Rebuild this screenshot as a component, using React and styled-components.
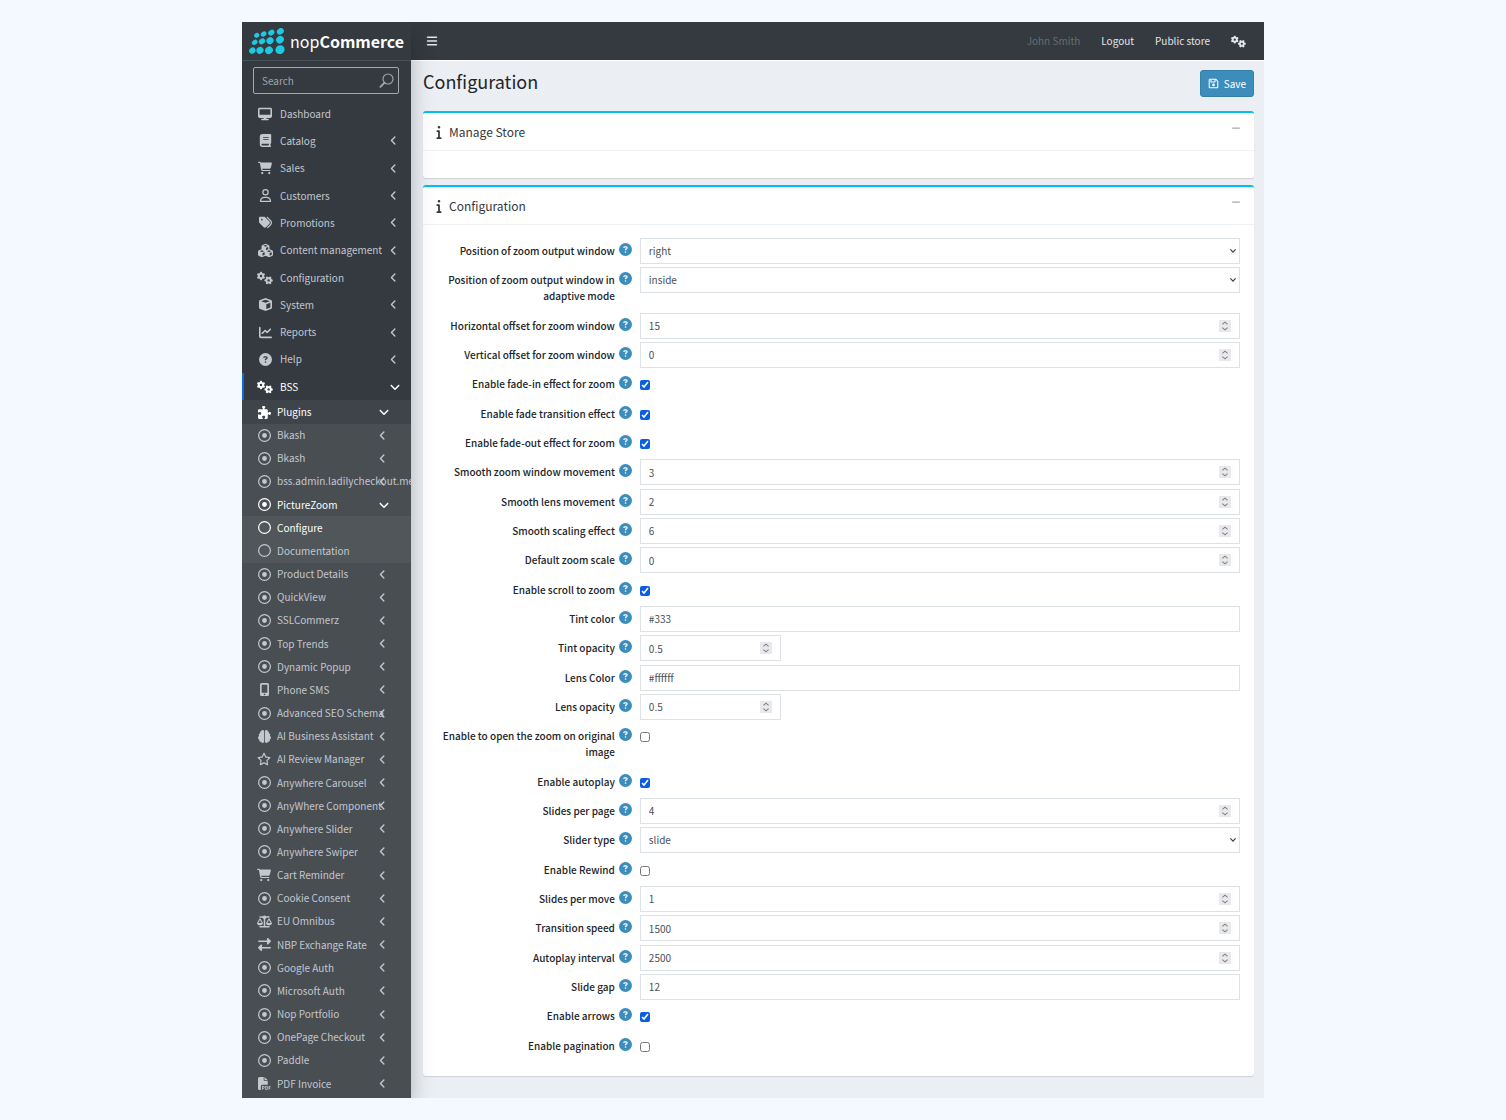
import React from "react";
import styled, { createGlobalStyle, css } from "styled-components";
import {
  FaAngleDown,
  FaAngleLeft,
  FaBars,
  FaBook,
  FaBrain,
  FaCartShopping,
  FaChartLine,
  FaCircleQuestion,
  FaCube,
  FaCubes,
  FaDesktop,
  FaFilePdf,
  FaGears,
  FaInfo,
  FaMinus,
  FaMobileScreenButton,
  FaPuzzlePiece,
  FaRegCircle,
  FaRegCircleDot,
  FaRegFloppyDisk,
  FaRegStar,
  FaRegUser,
  FaRightLeft,
  FaScaleBalanced,
  FaTags,
} from "react-icons/fa6";

const menu = [
  { text: "Dashboard", icon: FaDesktop, size: 14 },
  { text: "Catalog", icon: FaBook, arrow: "left" },
  { text: "Sales", icon: FaCartShopping, size: 14, arrow: "left" },
  { text: "Customers", icon: FaRegUser, arrow: "left" },
  { text: "Promotions", icon: FaTags, arrow: "left" },
  { text: "Content management", icon: FaCubes, size: 15, arrow: "left" },
  { text: "Configuration", icon: FaGears, size: 16, arrow: "left" },
  { text: "System", icon: FaCube, arrow: "left" },
  { text: "Reports", icon: FaChartLine, arrow: "left" },
  { text: "Help", icon: FaCircleQuestion, arrow: "left" },
  { text: "BSS", icon: FaGears, size: 16, arrow: "down", active: true },
  { text: "Plugins", level: 1, icon: FaPuzzlePiece, arrow: "down", active: true },
  { text: "Bkash", level: 2, arrow: "left" },
  { text: "Bkash", level: 2, arrow: "left" },
  { text: "bss.admin.ladilycheckout.menu", level: 2, arrow: "left" },
  { text: "PictureZoom", level: 2, arrow: "down", active: true },
  { text: "Configure", level: 3, icon: FaRegCircle, active: true },
  { text: "Documentation", level: 3, icon: FaRegCircle },
  { text: "Product Details", level: 2, arrow: "left" },
  { text: "QuickView", level: 2, arrow: "left" },
  { text: "SSLCommerz", level: 2, arrow: "left" },
  { text: "Top Trends", level: 2, arrow: "left" },
  { text: "Dynamic Popup", level: 2, arrow: "left" },
  { text: "Phone SMS", level: 2, icon: FaMobileScreenButton, arrow: "left" },
  { text: "Advanced SEO Schema", level: 2, arrow: "left" },
  { text: "AI Business Assistant", level: 2, icon: FaBrain, arrow: "left" },
  { text: "AI Review Manager", level: 2, icon: FaRegStar, size: 14, arrow: "left" },
  { text: "Anywhere Carousel", level: 2, arrow: "left" },
  { text: "AnyWhere Component", level: 2, arrow: "left" },
  { text: "Anywhere Slider", level: 2, arrow: "left" },
  { text: "Anywhere Swiper", level: 2, arrow: "left" },
  { text: "Cart Reminder", level: 2, icon: FaCartShopping, size: 14, arrow: "left" },
  { text: "Cookie Consent", level: 2, arrow: "left" },
  { text: "EU Omnibus", level: 2, icon: FaScaleBalanced, size: 15, arrow: "left" },
  { text: "NBP Exchange Rate", level: 2, icon: FaRightLeft, arrow: "left" },
  { text: "Google Auth", level: 2, arrow: "left" },
  { text: "Microsoft Auth", level: 2, arrow: "left" },
  { text: "Nop Portfolio", level: 2, arrow: "left" },
  { text: "OnePage Checkout", level: 2, arrow: "left" },
  { text: "Paddle", level: 2, arrow: "left" },
  { text: "PDF Invoice", level: 2, icon: FaFilePdf, arrow: "left" },
];

const fields = [
  { label: "Position of zoom output window", type: "select", value: "right" },
  { label: "Position of zoom output window in adaptive mode", type: "select", value: "inside" },
  { label: "Horizontal offset for zoom window", type: "number", value: 15 },
  { label: "Vertical offset for zoom window", type: "number", value: 0 },
  { label: "Enable fade-in effect for zoom", type: "checkbox", value: true },
  { label: "Enable fade transition effect", type: "checkbox", value: true },
  { label: "Enable fade-out effect for zoom", type: "checkbox", value: true },
  { label: "Smooth zoom window movement", type: "number", value: 3 },
  { label: "Smooth lens movement", type: "number", value: 2 },
  { label: "Smooth scaling effect", type: "number", value: 6 },
  { label: "Default zoom scale", type: "number", value: 0 },
  { label: "Enable scroll to zoom", type: "checkbox", value: true },
  { label: "Tint color", type: "text", value: "#333" },
  { label: "Tint opacity", type: "number", value: 0.5, short: true },
  { label: "Lens Color", type: "text", value: "#ffffff" },
  { label: "Lens opacity", type: "number", value: 0.5, short: true },
  { label: "Enable to open the zoom on original image", type: "checkbox", value: false },
  { label: "Enable autoplay", type: "checkbox", value: true },
  { label: "Slides per page", type: "number", value: 4 },
  { label: "Slider type", type: "select", value: "slide" },
  { label: "Enable Rewind", type: "checkbox", value: false },
  { label: "Slides per move", type: "number", value: 1 },
  { label: "Transition speed", type: "number", value: 1500 },
  { label: "Autoplay interval", type: "number", value: 2500 },
  { label: "Slide gap", type: "text", value: "12" },
  { label: "Enable arrows", type: "checkbox", value: true },
  { label: "Enable pagination", type: "checkbox", value: false },
];

const logoDots = [
  [23, 22, 8, 7],
  [44, 18, 9, 7],
  [67, 14, 10, 8],
  [94, 10, 11, 9],
  [17, 43, 9, 7],
  [39, 40, 10, 8],
  [63, 38, 11, 10],
  [93, 35, 12, 11],
  [10, 68, 10, 9],
  [33, 67, 11, 10],
  [60, 67, 12, 11],
  [93, 65, 14, 13],
];

function Logo() {
  return (
    <Brand href="#">
      <svg width="36" height="27" viewBox="0 0 108 81" fill="#1fc8e3" aria-hidden="true">
        {logoDots.map(([x, y, rx, ry]) => (
          <ellipse
            key={`${x}-${y}`}
            cx={x}
            cy={y}
            rx={rx}
            ry={ry}
            transform={`rotate(-35 ${x} ${y})`}
          />
        ))}
      </svg>
      <BrandText>
        nop<b>Commerce</b>
      </BrandText>
    </Brand>
  );
}

function MenuItem({ item }) {
  const { text, level = 0, icon: Icon = FaRegCircleDot, size = 13, arrow, active } = item;
  return (
    <MenuRow $level={level} $active={active}>
      <MenuLink href="#" $level={level} $active={active}>
        <MenuIcon>
          <Icon size={size} />
        </MenuIcon>
        <MenuText>{text}</MenuText>
        {arrow && (
          <MenuArrow $level={level} $down={arrow === "down"}>
            {arrow === "down" ? <FaAngleDown size={12} /> : <FaAngleLeft size={11} />}
          </MenuArrow>
        )}
      </MenuLink>
    </MenuRow>
  );
}

function Sidebar() {
  return (
    <SidebarWrap>
      <Logo />
      <SearchBox>
        <SearchInput type="search" placeholder="Search" aria-label="Search" />
        <svg width="16" height="16" viewBox="0 0 16 16" fill="none" stroke="#a9a9a5" aria-hidden="true">
          <circle cx="9" cy="6" r="5" strokeWidth="1.1" />
          <path d="M5.6 9.6 1.4 13.8" strokeWidth="1.8" strokeLinecap="round" />
        </svg>
      </SearchBox>
      <Menu>
        {menu.map((item, i) => (
          <MenuItem key={i} item={item} />
        ))}
      </Menu>
    </SidebarWrap>
  );
}

function Control({ field, id }) {
  if (field.type === "checkbox") {
    return <Checkbox id={id} type="checkbox" defaultChecked={field.value} />;
  }
  if (field.type === "select") {
    return (
      <Box>
        <Select id={id} defaultValue={field.value}>
          <option>{field.value}</option>
        </Select>
        <SelectArrow width="8" height="6" viewBox="0 0 8 6" aria-hidden="true">
          <path d="M1.4 1.4 4 4.2 6.6 1.4" fill="none" stroke="#3c4248" strokeWidth="1.2" />
        </SelectArrow>
      </Box>
    );
  }
  if (field.type === "number") {
    return (
      <Box $short={field.short}>
        <Input id={id} type="number" step="any" defaultValue={field.value} />
        <Spinner width="12" height="12" viewBox="0 0 12 12" aria-hidden="true">
          <rect width="12" height="12" fill="#e9e9ec" />
          <path
            d="M3.4 4.4 6 2.2l2.6 2.2M3.4 7.6 6 9.8l2.6-2.2"
            fill="none"
            stroke="#7b7f86"
            strokeWidth="1.1"
          />
        </Spinner>
      </Box>
    );
  }
  return (
    <Box>
      <Input id={id} type="text" defaultValue={field.value} />
    </Box>
  );
}

function Card({ title, grow, children }) {
  return (
    <CardWrap $grow={grow}>
      <CardHeader>
        <FaInfo size={14} />
        <CardTitle>{title}</CardTitle>
        <Collapse type="button" aria-label={`Collapse ${title}`}>
          <FaMinus />
        </Collapse>
      </CardHeader>
      <CardBody>{children}</CardBody>
    </CardWrap>
  );
}

export default function App() {
  return (
    <Page>
      <GlobalStyle />
      <Window>
        <Sidebar />
        <Main>
          <Topbar>
            <ToggleButton type="button" aria-label="Toggle menu">
              <FaBars />
            </ToggleButton>
            <UserName>John Smith</UserName>
            <TopLink href="#">Logout</TopLink>
            <TopLink href="#">Public store</TopLink>
            <TopLink href="#" aria-label="Settings">
              <FaGears size={15} />
            </TopLink>
          </Topbar>
          <Content>
            <TitleBar>
              <Title>Configuration</Title>
              <SaveButton type="button">
                <FaRegFloppyDisk size={11} />
                Save
              </SaveButton>
            </TitleBar>
            <Card title="Manage Store" />
            <Card title="Configuration" grow>
              {fields.map((field, i) => (
                <FormRow key={field.label}>
                  <LabelCell>
                    <Label htmlFor={`field-${i}`}>{field.label}</Label>
                    <FaCircleQuestion />
                  </LabelCell>
                  <Control field={field} id={`field-${i}`} />
                </FormRow>
              ))}
            </Card>
          </Content>
        </Main>
      </Window>
    </Page>
  );
}

const GlobalStyle = createGlobalStyle`
  * {
    box-sizing: border-box;
  }
  body {
    margin: 0;
    background: #f4f8ff;
    color: #212529;
    font-family: "Noto Sans CJK SC", "Open Sans", sans-serif;
    font-size: 10px;
    line-height: 16px;
  }
  button, input, select {
    font: inherit;
  }
  a {
    text-decoration: none;
  }
`;

const Page = styled.div`
  display: flex;
  min-height: 100vh;
  padding: 22px 242px;
`;

const Window = styled.div`
  display: flex;
  flex: 1;
  min-width: 0;
  overflow: clip;
  background: #ebeef3;
`;

const SidebarWrap = styled.aside`
  display: flex;
  flex-direction: column;
  flex: 0 0 169px;
  overflow: hidden;
  background: #343a40;
  color: #c2c7d0;
  box-shadow: 0 10px 20px rgba(0, 0, 0, 0.25);
  z-index: 1;
`;

const Brand = styled.a`
  display: flex;
  align-items: center;
  gap: 5px;
  height: 39px;
  padding-left: 7px;
  border-bottom: 1px solid #4b545c;
  color: #fff;
`;

const BrandText = styled.span`
  font-size: 16px;
  line-height: 24px;
`;

const SearchBox = styled.div`
  display: flex;
  align-items: center;
  height: 27px;
  margin: 6px 12px 6px 11px;
  padding: 0 3px 0 8px;
  border: 1px solid #a5a8aa;
  border-radius: 2px;
`;

const SearchInput = styled.input`
  flex: 1;
  min-width: 0;
  padding: 0;
  border: 0;
  outline: 0;
  background: transparent;
  color: #fff;
  &::placeholder {
    color: #a0a4a8;
  }
`;

const Menu = styled.ul`
  display: flex;
  flex: 1;
  flex-direction: column;
  margin: 0;
  padding: 0 0 3px;
  list-style: none;
  background: linear-gradient(#343a40 50%, #494e53 50%);
`;

const rowColors = ["#343a40", "#3f444a", "#494e53", "#505659"];

const MenuRow = styled.li`
  display: flex;
  flex: ${({ $level }) => ($level ? "1 0 23px" : "2 0 27px")};
  background: ${({ $level }) => rowColors[$level]};
  ${({ $level, $active }) =>
    $level === 0 &&
    $active &&
    css`
      box-shadow: inset 2px 0 #0b6be0;
    `}
`;

const MenuLink = styled.a`
  display: flex;
  flex: 1;
  align-items: center;
  gap: ${({ $level }) => ($level ? 5 : 7)}px;
  min-width: 0;
  padding-left: ${({ $level }) => ($level ? 14 : 15)}px;
  color: ${({ $active }) => ($active ? "#fff" : "#c2c7d0")};
  white-space: nowrap;
`;

const MenuIcon = styled.span`
  display: flex;
  flex: 0 0 16px;
  justify-content: center;
`;

const MenuText = styled.span`
  flex: 1;
  width: 0;
`;

const MenuArrow = styled.span`
  display: flex;
  flex: none;
  margin-right: ${({ $level, $down }) => ($level ? 23 : 12) - ($down ? 2 : 0)}px;
`;

const Main = styled.div`
  display: flex;
  flex: 1;
  flex-direction: column;
  min-width: 0;
`;

const Topbar = styled.header`
  display: flex;
  align-items: center;
  gap: 21px;
  height: 39px;
  padding: 0 18px 0 15px;
  border-bottom: 1px solid #fff;
  background: #343a40;
`;

const ToggleButton = styled.button`
  display: flex;
  margin-right: auto;
  padding: 0;
  border: 0;
  background: none;
  color: #e3e5e8;
  font-size: 12px;
  cursor: pointer;
`;

const UserName = styled.span`
  color: #686d71;
`;

const TopLink = styled.a`
  display: flex;
  align-items: center;
  color: #e3e5e8;
`;

const Content = styled.main`
  display: flex;
  flex: 1;
  flex-direction: column;
  gap: 7px;
  padding: 9px 10px 22px 12px;
`;

const TitleBar = styled.div`
  display: flex;
  justify-content: space-between;
  margin-bottom: 7px;
`;

const Title = styled.h1`
  margin: 0;
  font-size: 18px;
  font-weight: 400;
  line-height: 22px;
`;

const SaveButton = styled.button`
  display: flex;
  align-items: center;
  gap: 5px;
  height: 27px;
  padding: 0 7px;
  border: 1px solid #367fa9;
  border-radius: 3px;
  background: #3c8dbc;
  color: #fff;
  cursor: pointer;
`;

const CardWrap = styled.section`
  display: flex;
  flex-direction: column;
  flex: ${({ $grow }) => ($grow ? 1 : "none")};
  min-height: 67px;
  border-top: 2px solid #00c0ef;
  border-radius: 3px;
  background: #fff;
  box-shadow: 0 1px 1px rgba(0, 0, 0, 0.12);
`;

const CardHeader = styled.header`
  display: flex;
  align-items: center;
  gap: 3px;
  height: 38px;
  padding: 0 13px 0 9px;
  border-bottom: 1px solid #f1f2f4;
  color: #33383d;
`;

const CardTitle = styled.h2`
  margin: 0;
  font-size: 12px;
  font-weight: 400;
  line-height: 18px;
`;

const Collapse = styled.button`
  display: flex;
  margin: 0 0 8px auto;
  padding: 0;
  border: 0;
  background: none;
  color: #a3abb3;
  cursor: pointer;
`;

const CardBody = styled.div`
  display: flex;
  flex: 1;
  flex-direction: column;
  padding: 13px 14px 14px 6px;
`;

const FormRow = styled.div`
  display: grid;
  flex: 1 0 auto;
  grid-template-columns: 26% 1fr;
  align-items: start;
`;

const LabelCell = styled.div`
  display: flex;
  justify-content: flex-end;
  gap: 4px;
  padding: 5px 8px 8px 0;
  svg {
    flex: none;
    color: #3c8dbc;
    font-size: 13px;
  }
`;

const Label = styled.label`
  font-weight: 500;
  text-align: right;
`;

const Box = styled.div`
  display: grid;
  align-items: center;
  justify-items: end;
  width: ${({ $short }) => ($short ? "141px" : "100%")};
  height: 26px;
  border: 1px solid #dde2e7;
  background: #fff;
  & > * {
    grid-area: 1 / 1;
  }
`;

const inputStyle = css`
  width: 100%;
  height: 24px;
  padding: 0 8px;
  border: 0;
  outline: 0;
  background: transparent;
  color: #495057;
`;

const Input = styled.input`
  ${inputStyle}
  appearance: textfield;
  &::-webkit-inner-spin-button {
    appearance: none;
  }
`;

const Select = styled.select`
  ${inputStyle}
  appearance: none;
`;

const SelectArrow = styled.svg`
  margin-right: 2px;
  pointer-events: none;
`;

const Spinner = styled.svg`
  margin-right: 8px;
  pointer-events: none;
`;

const Checkbox = styled.input`
  width: 10px;
  height: 10px;
  margin: 9px 0 0;
  accent-color: #0a5fe0;
`;
